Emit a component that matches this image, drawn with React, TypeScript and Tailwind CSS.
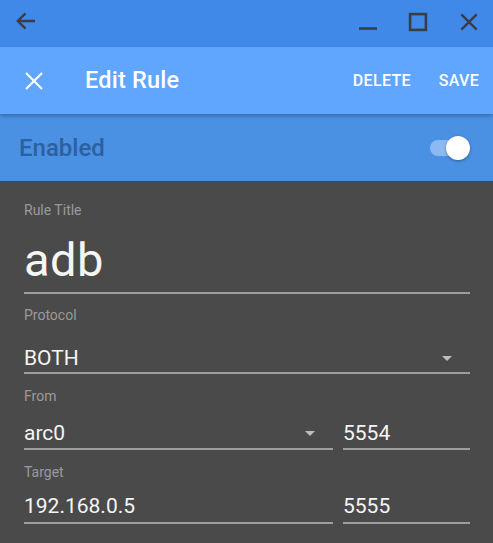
import React from "react";

function Caret() {
  return (
    <svg width="10" height="5" viewBox="0 0 10 5" className="block">
      <path d="M0 0 L10 0 L5 5 Z" fill="#bdbdbd" />
    </svg>
  );
}

export default function App() {
  return (
    <div className="w-[493px] h-[543px] flex flex-col overflow-hidden bg-[#4a4a4a] font-['Roboto',sans-serif]">
      {/* window title bar */}
      <div className="h-[47px] shrink-0 bg-[#4189e9] flex items-start pt-[9px]">
        <svg width="24" height="24" viewBox="0 0 24 24" className="ml-[14px] block">
          <path d="M21 12 H4 M11.5 4.3 L3.8 12 L11.5 19.7" fill="none" stroke="#3a3d42" strokeWidth="2.4" />
        </svg>
        <div className="flex-1" />
        <svg width="24" height="24" viewBox="0 0 24 24" className="block">
          <path d="M3 19.5 H21" fill="none" stroke="#3a3d42" strokeWidth="2.6" />
        </svg>
        <svg width="24" height="24" viewBox="0 0 24 24" className="block ml-[26.5px] mt-[0.5px]">
          <rect x="4.1" y="4.1" width="15.8" height="15.8" fill="none" stroke="#3a3d42" strokeWidth="2.6" />
        </svg>
        <svg width="24" height="24" viewBox="0 0 24 24" className="block ml-[27px] mr-[12px] mt-[0.5px]">
          <path d="M4.3 4.3 L19.7 19.7 M19.7 4.3 L4.3 19.7" fill="none" stroke="#3a3d42" strokeWidth="2.4" />
        </svg>
      </div>

      {/* app bar */}
      <div className="h-[67px] shrink-0 bg-[#60a5fe] flex items-center relative z-10 shadow-[0_2px_4px_rgba(0,0,0,0.25)]">
        <svg width="24" height="24" viewBox="0 0 24 24" className="block ml-[22px] mt-[1px]">
          <path d="M4 4 L20 20 M20 4 L4 20" fill="none" stroke="#ffffff" strokeWidth="2.1" />
        </svg>
        <div className="ml-[39px] text-[23.5px] font-medium text-white leading-none tracking-[0.2px]">Edit Rule</div>
        <div className="flex-1" />
        <div className="text-[16px] font-medium text-white tracking-[0.3px] leading-none">DELETE</div>
        <div className="ml-[28px] mr-[14px] text-[16px] font-medium text-white tracking-[0.3px] leading-none">SAVE</div>
      </div>

      {/* enabled bar */}
      <div className="h-[67px] shrink-0 bg-[#4a90e3] flex items-center">
        <div className="ml-[19px] text-[24px] font-medium text-[#2c609f] leading-none">Enabled</div>
        <div className="flex-1" />
        <div className="relative w-[40px] h-[24px] mr-[23px] flex items-center">
          <div className="w-[36px] h-[16px] rounded-full bg-[#8bb9f1]" />
          <div className="absolute right-0 top-0 w-[24px] h-[24px] rounded-full bg-white shadow-[0_1px_3px_rgba(0,0,0,0.35)]" />
        </div>
      </div>

      {/* form */}
      <div className="flex-1 flex flex-col pl-[24px] pr-[23px] pt-[21px]">
        <div className="text-[14px] leading-[16px] text-[#9a9a9a]">Rule Title</div>
        <div className="mt-[17px] text-[47px] leading-[50px] text-[#f5f5f5] tracking-[0.5px]">adb</div>
        <div className="mt-[7px] h-[2px] bg-[#9e9e9e]" />

        <div className="mt-[13px] text-[14px] leading-[16px] text-[#9a9a9a]">Protocol</div>
        <div className="mt-[21px] h-[28px] flex items-center">
          <div className="flex-1 text-[21px] leading-[28px] text-[#f5f5f5]">BOTH</div>
          <div className="mr-[18px] mt-[1px]"><Caret /></div>
        </div>
        <div className="h-[2px] bg-[#9e9e9e]" />

        <div className="mt-[14px] text-[14px] leading-[16px] text-[#9a9a9a]">From</div>
        <div className="mt-[15px] flex gap-[10px]">
          <div className="flex-1 flex flex-col">
            <div className="h-[28px] flex items-center">
              <div className="flex-1 text-[21px] leading-[28px] text-[#f5f5f5]">arc0</div>
              <div className="mr-[18px] mt-[1px]"><Caret /></div>
            </div>
            <div className="mt-[1px] h-[2px] bg-[#9e9e9e]" />
          </div>
          <div className="w-[127px] flex flex-col">
            <div className="h-[28px] text-[21px] leading-[28px] text-[#f5f5f5]">5554</div>
            <div className="mt-[1px] h-[2px] bg-[#9e9e9e]" />
          </div>
        </div>

        <div className="mt-[14px] text-[14px] leading-[16px] text-[#9a9a9a]">Target</div>
        <div className="mt-[12px] flex gap-[10px]">
          <div className="flex-1 flex flex-col">
            <div className="h-[28px] text-[21px] leading-[28px] text-[#f5f5f5]">192.168.0.5</div>
            <div className="mt-[2px] h-[2px] bg-[#9e9e9e]" />
          </div>
          <div className="w-[127px] flex flex-col">
            <div className="h-[28px] text-[21px] leading-[28px] text-[#f5f5f5]">5555</div>
            <div className="mt-[2px] h-[2px] bg-[#9e9e9e]" />
          </div>
        </div>
      </div>
    </div>
  );
}
